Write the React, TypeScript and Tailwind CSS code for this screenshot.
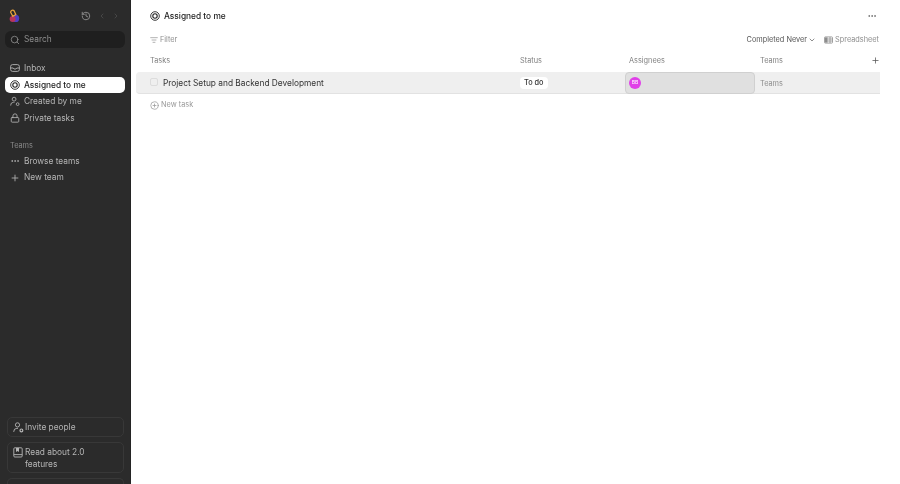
import React from 'react';
import { Search, History, ChevronLeft, ChevronRight, Lock, Plus, Ellipsis, ChevronDown, ListFilter, CirclePlus } from 'lucide-react';

const TargetIcon = ({ size = 10 }: { size?: number }) => (
  <svg width={size} height={size} viewBox="0 0 10 10" fill="none" stroke="currentColor">
    <circle cx="5" cy="5" r="4.3" strokeWidth="0.9" />
    <circle cx="5" cy="5" r="2.2" strokeWidth="1.1" />
  </svg>
);

const InboxIcon = () => (
  <svg width="10" height="10" viewBox="0 0 10 10" fill="none" stroke="currentColor" strokeWidth="0.9">
    <rect x="0.6" y="1.6" width="8.8" height="6.8" rx="2" />
    <path d="M0.8 5h2.4l0.8 1h2l0.8-1h2.4" />
  </svg>
);

const CreatedIcon = () => (
  <svg width="11" height="11" viewBox="0 0 11 11" fill="none" stroke="currentColor" strokeWidth="0.9">
    <circle cx="4.5" cy="2.9" r="2.1" />
    <path d="M0.8 10v-0.6a3 3 0 0 1 3-3h1.2" />
    <circle cx="8.4" cy="8.4" r="1.5" />
  </svg>
);

const InviteIcon = () => (
  <svg width="11" height="11" viewBox="0 0 11 11" fill="none" stroke="currentColor" strokeWidth="0.9">
    <circle cx="4.5" cy="2.9" r="2.1" />
    <path d="M0.8 10v-0.6a3 3 0 0 1 3-3h1.2" />
    <circle cx="8.4" cy="8.4" r="1.4" strokeWidth="1.2" />
  </svg>
);

const BookIcon = () => (
  <svg width="10" height="11" viewBox="0 0 10 11" fill="none" stroke="currentColor" strokeWidth="0.9">
    <rect x="0.8" y="0.8" width="8.4" height="9.2" rx="1" />
    <path d="M0.8 7.6h8.4" />
    <path d="M3 1v4l1.5-1 1.5 1V1" fill="currentColor" stroke="none" />
  </svg>
);

const SheetIcon = () => (
  <svg width="9" height="8" viewBox="0 0 9 8" fill="none" stroke="currentColor" strokeWidth="0.8">
    <rect x="0.5" y="0.9" width="8" height="6.2" rx="0.8" />
    <rect x="1" y="1.4" width="2.6" height="5.2" fill="currentColor" stroke="none" />
    <path d="M3.6 3h4.9M3.6 5h4.9M6 1v6" />
  </svg>
);

const NavItem = ({ icon, label, active }: { icon: React.ReactNode; label: string; active?: boolean }) => (
  <div className={`h-[16.67px] mx-[5px] px-[5px] rounded-[5px] flex items-center gap-[4px] text-[8.33px] ${active ? 'bg-white text-[#222] font-medium' : 'text-[#b5b5b5]'}`}>
    <span className="w-[10px] flex justify-center">{icon}</span>
    <span>{label}</span>
  </div>
);

const App = () => {
  return (
    <div className="flex h-[484px] w-[900px] overflow-hidden bg-white font-['Inter',sans-serif] [will-change:transform]">
      <aside className="w-[131px] h-full bg-[#2b2b2b] flex flex-col border-r border-[#242424]">
        <div className="h-[31px] pl-[8px] pr-[9px] flex items-center justify-between">
          <svg width="12" height="14" viewBox="0 0 12 14" fill="none">
            <circle cx="7.6" cy="9.4" r="3.6" fill="#4f3fc4" />
            <circle cx="4.6" cy="10" r="3" fill="#b8345c" />
            <path d="M2.6 3.2a2 2 0 0 1 3.6-1.2l1.6 3.6-3 1.8z" fill="none" stroke="#e8a33c" strokeWidth="1.3" />
          </svg>
          <div className="flex items-center mr-px">
            <History size={10} className="text-[#999]" />
            <ChevronLeft size={8} className="text-[#555] ml-[7px]" />
            <ChevronRight size={8} className="text-[#555] ml-[6px]" />
          </div>
        </div>
        <div className="mx-[5px] h-[17px] rounded-[6px] bg-[#1f1f1f] flex items-center gap-[4px] px-[5px] text-[8.33px] text-[#8d8d8d]">
          <Search size={10} />
          <span>Search</span>
        </div>
        <div className="mt-[12px] flex flex-col">
          <NavItem icon={<InboxIcon />} label="Inbox" />
          <NavItem icon={<TargetIcon />} label="Assigned to me" active />
          <NavItem icon={<CreatedIcon />} label="Created by me" />
          <NavItem icon={<Lock size={10} />} label="Private tasks" />
        </div>
        <div className="mt-[13px] ml-[10px] h-[13px] flex items-center text-[7.33px] text-[#8a8a8a]">Teams</div>
        <div className="flex flex-col">
          <NavItem icon={<Ellipsis size={10} />} label="Browse teams" />
          <NavItem icon={<Plus size={10} />} label="New team" />
        </div>
        <div className="mt-auto ml-[7px] mr-[6px] flex flex-col gap-[5px]">
          <div className="h-[20px] rounded-[5px] border border-[#383838] flex items-center gap-[1px] px-[5px] text-[8.33px] text-[#b5b5b5]">
            <InviteIcon />
            <span>Invite people</span>
          </div>
          <div className="h-[31px] rounded-[5px] border border-[#383838] flex items-start gap-[2px] px-[5px] pt-[3px] text-[8.33px] leading-[12px] text-[#b5b5b5]">
            <span className="mt-[1px] shrink-0"><BookIcon /></span>
            <span>Read about 2.0 features</span>
          </div>
          <div className="h-[6px] rounded-t-[5px] border border-b-0 border-[#383838]" />
        </div>
      </aside>
      <main className="flex-1 flex flex-col text-[#333]">
        <div className="h-[32px] pl-[19px] pr-[23px] flex items-center justify-between">
          <div className="flex items-center gap-[4px] text-[8.33px] font-medium text-[#222]">
            <TargetIcon />
            <span>Assigned to me</span>
          </div>
          <Ellipsis size={10} className="text-[#666]" />
        </div>
        <div className="h-[17px] pl-[19px] pr-[21px] flex items-center justify-between text-[7.33px] text-[#8d8d8d]">
          <div className="flex items-center gap-[2px]">
            <ListFilter size={8} />
            <span>Filter</span>
          </div>
          <div className="flex items-center gap-[8px]">
            <div className="flex items-center gap-[1px] text-[#555]">
              <span>Completed Never</span>
              <ChevronDown size={8} />
            </div>
            <div className="flex items-center gap-[2px]">
              <SheetIcon />
              <span>Spreadsheet</span>
            </div>
          </div>
        </div>
        <div className="h-[23px] mr-[20px] pl-[19px] pt-px flex items-center text-[7.33px] text-[#808080]">
          <span className="w-[370px]">Tasks</span>
          <span className="w-[109px]">Status</span>
          <span className="w-[131px]">Assignees</span>
          <span className="flex-1">Teams</span>
          <Plus size={9} className="text-[#555] -mt-px" />
        </div>
        <div className="h-[22px] ml-[5px] mr-[20px] pl-[14px] bg-[#efefef] border-b border-[#e2e2e2] rounded-l-[4px] flex items-center">
          <div className="w-[370px] flex items-center gap-[5px] text-[8.33px] text-[#333]">
            <span className="w-[8px] h-[8px] rounded-[2px] border border-[#dcdcdc]" />
            <span className="pt-px">Project Setup and Backend Development</span>
          </div>
          <div className="w-[105px] flex items-center">
            <span className="bg-white rounded-[4px] h-[12px] px-[4px] pt-px flex items-center text-[7.33px] font-medium text-[#333]">To do</span>
          </div>
          <div className="w-[130px] h-[22px] mr-[5px] rounded-[4px] bg-[#e0e0e0] border border-[#d0d0d0] flex items-center pl-[3px]">
            <span className="w-[12px] h-[12px] rounded-full bg-[#e040e8] text-white text-[5px] flex items-center justify-center">BB</span>
          </div>
          <span className="pt-[3px] text-[7.33px] text-[#8d8d8d]">Teams</span>
        </div>
        <div className="h-[21px] pl-[19px] pt-px flex items-center gap-[2px] text-[7.33px] text-[#999]">
          <CirclePlus size={9} />
          <span>New task</span>
        </div>
      </main>
    </div>
  );
};

export default App;
